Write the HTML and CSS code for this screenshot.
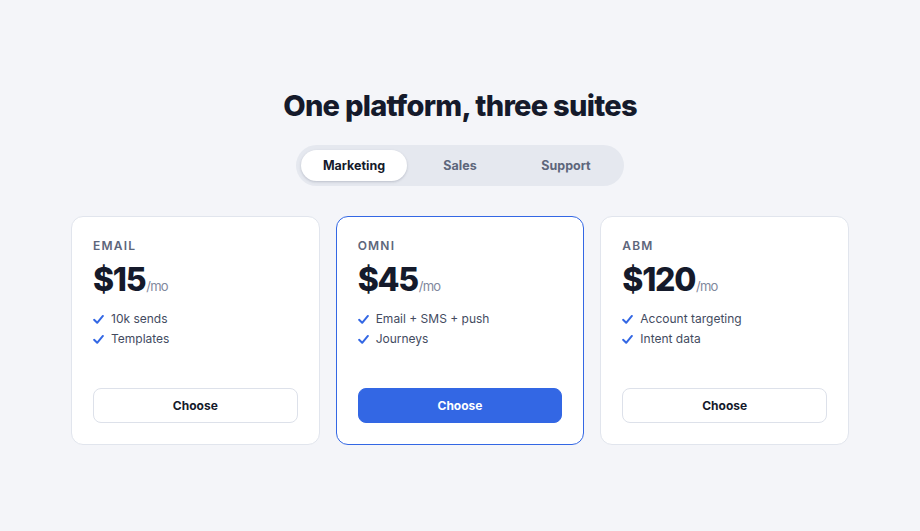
FILE: index.html
```html
<!DOCTYPE html>
<html lang="en">
<head>
<meta charset="utf-8">
<title>Pricing</title>
<link rel="stylesheet" href="styles.css">
</head>
<body>
<main class="page">
  <h1 class="title">One platform, three suites</h1>
  <div class="tabs">
    <button class="tab active">Marketing</button>
    <button class="tab">Sales</button>
    <button class="tab">Support</button>
  </div>
  <div class="cards">
    <section class="card">
      <div class="label">EMAIL</div>
      <div class="price"><span class="amount">$15</span><span class="per">/mo</span></div>
      <ul class="features">
        <li><svg class="check" viewBox="0 0 10 10"><path d="M1 5.3 L3.8 8 L9 1.8"/></svg>10k sends</li>
        <li><svg class="check" viewBox="0 0 10 10"><path d="M1 5.3 L3.8 8 L9 1.8"/></svg>Templates</li>
      </ul>
      <button class="choose">Choose</button>
    </section>
    <section class="card featured">
      <div class="label">OMNI</div>
      <div class="price"><span class="amount">$45</span><span class="per">/mo</span></div>
      <ul class="features">
        <li><svg class="check" viewBox="0 0 10 10"><path d="M1 5.3 L3.8 8 L9 1.8"/></svg>Email + SMS + push</li>
        <li><svg class="check" viewBox="0 0 10 10"><path d="M1 5.3 L3.8 8 L9 1.8"/></svg>Journeys</li>
      </ul>
      <button class="choose primary">Choose</button>
    </section>
    <section class="card">
      <div class="label">ABM</div>
      <div class="price"><span class="amount">$120</span><span class="per">/mo</span></div>
      <ul class="features">
        <li><svg class="check" viewBox="0 0 10 10"><path d="M1 5.3 L3.8 8 L9 1.8"/></svg>Account targeting</li>
        <li><svg class="check" viewBox="0 0 10 10"><path d="M1 5.3 L3.8 8 L9 1.8"/></svg>Intent data</li>
      </ul>
      <button class="choose">Choose</button>
    </section>
  </div>
</main>
</body>
</html>
```

FILE: styles.css
```css
* { box-sizing: border-box; }
html, body { margin: 0; padding: 0; }
body {
  background: #f4f5f9;
  font-family: Inter, "Noto Sans", sans-serif;
  color: #151a2b;
  width: 920px;
  height: 531px;
  overflow: hidden;
}
.page {
  display: flex;
  flex-direction: column;
  align-items: center;
  padding-top: 86px;
}
.title {
  margin: 0;
  font-size: 29px;
  line-height: 40px;
  font-weight: 800;
  letter-spacing: -0.025em;
  color: #151a2b;
}
.tabs {
  margin-top: 19px;
  display: flex;
  padding: 5px;
  background: #e5e8ef;
  border-radius: 999px;
}
.tab {
  width: 106px;
  height: 31px;
  border: 0;
  background: transparent;
  border-radius: 999px;
  font-family: inherit;
  font-size: 12.5px;
  font-weight: 700;
  color: #5d667b;
  padding: 0;
  cursor: pointer;
}
.tab.active {
  background: #ffffff;
  color: #151a2b;
  box-shadow: 0 1px 3px rgba(20, 30, 60, 0.14), 0 1px 2px rgba(20, 30, 60, 0.06);
}
.cards {
  margin-top: 30px;
  width: 778px;
  display: grid;
  grid-template-columns: repeat(3, 1fr);
  gap: 16px;
}
.card {
  background: #ffffff;
  border: 1px solid #e1e5ed;
  border-radius: 12px;
  padding: 21px;
  display: flex;
  flex-direction: column;
  height: 229px;
}
.card.featured {
  border-color: #3367e4;
}
.label {
  font-size: 12px;
  line-height: 16px;
  font-weight: 600;
  letter-spacing: 0.1em;
  color: #5d667b;
}
.price {
  margin-top: 6px;
  display: flex;
  align-items: baseline;
  line-height: 40px;
}
.amount {
  font-size: 32px;
  font-weight: 800;
  letter-spacing: -0.04em;
  color: #151a2b;
}
.per {
  font-size: 13px;
  letter-spacing: -0.06em;
  color: #7f889d;
  margin-left: 1px;
}
.features {
  list-style: none;
  margin: 3px 0 0;
  padding: 0;
}
.features li {
  display: flex;
  align-items: center;
  gap: 7px;
  font-size: 12px;
  line-height: 20px;
  color: #434b5f;
}
.check {
  width: 11px;
  height: 11px;
  fill: none;
  stroke: #3367e4;
  stroke-width: 1.8;
  stroke-linecap: round;
  stroke-linejoin: round;
}
.choose {
  margin-top: auto;
  height: 35px;
  width: 100%;
  border: 1px solid #dde1ea;
  border-radius: 8px;
  background: #ffffff;
  font-family: inherit;
  font-size: 12px;
  font-weight: 700;
  color: #151a2b;
  cursor: pointer;
}
.choose.primary {
  background: #3367e4;
  border-color: #3367e4;
  color: #ffffff;
}
```
